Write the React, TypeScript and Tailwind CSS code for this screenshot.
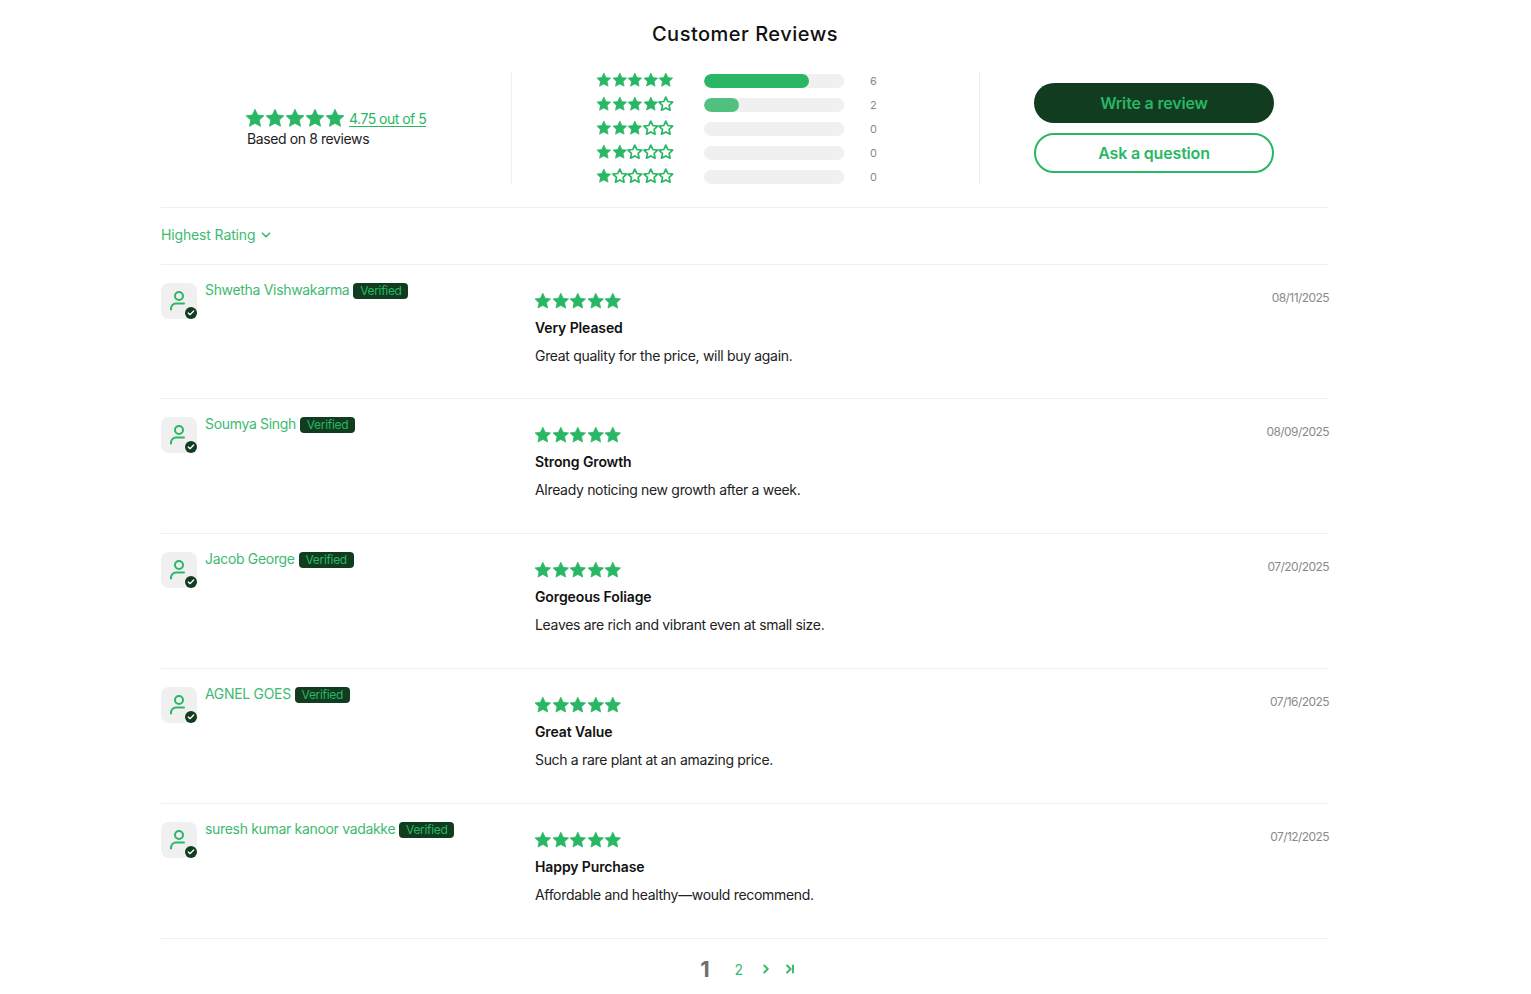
import React from 'react';
import { ChevronDown, ChevronRight, ChevronLast, Check } from 'lucide-react';

const STAR = 'M12 1.6l3.2 6.9 7.4.9-5.5 5.1 1.5 7.4L12 18.3l-6.6 3.6 1.5-7.4L1.4 9.4l7.4-.9z';

function Star({ filled, size }: { filled: boolean; size: number }) {
  return (
    <svg width={size} height={size} viewBox="0 0 24 24" className="shrink-0">
      <path
        d={STAR}
        fill={filled ? '#29b765' : 'none'}
        stroke="#29b765"
        strokeWidth={filled ? 1 : 2.6}
        strokeLinejoin="round"
      />
    </svg>
  );
}

function Stars({ count, size }: { count: number; size: number }) {
  return (
    <div className="flex items-center">
      {[1, 2, 3, 4, 5].map((i) => (
        <Star key={i} filled={i <= count} size={size} />
      ))}
    </div>
  );
}

const BARS = [
  { stars: 5, pct: 'w-[105px]', tone: 'bg-[#29b765]', total: 6 },
  { stars: 4, pct: 'w-[35px]', tone: 'bg-[#52c17f]', total: 2 },
  { stars: 3, pct: 'w-0', tone: 'bg-[#29b765]', total: 0 },
  { stars: 2, pct: 'w-0', tone: 'bg-[#29b765]', total: 0 },
  { stars: 1, pct: 'w-0', tone: 'bg-[#29b765]', total: 0 },
];

const REVIEWS = [
  { name: 'Shwetha Vishwakarma', date: '08/11/2025', title: 'Very Pleased', body: 'Great quality for the price, will buy again.' },
  { name: 'Soumya Singh', date: '08/09/2025', title: 'Strong Growth', body: 'Already noticing new growth after a week.' },
  { name: 'Jacob George', date: '07/20/2025', title: 'Gorgeous Foliage', body: 'Leaves are rich and vibrant even at small size.' },
  { name: 'AGNEL GOES', date: '07/16/2025', title: 'Great Value', body: 'Such a rare plant at an amazing price.' },
  { name: 'suresh kumar kanoor vadakke', date: '07/12/2025', title: 'Happy Purchase', body: 'Affordable and healthy—would recommend.' },
];

function Avatar() {
  return (
    <div className="relative w-9 h-9 rounded-lg bg-[#f0f0f0] flex items-center justify-center shrink-0">
      <svg width="24" height="24" viewBox="0 0 24 24" fill="none" stroke="#29b765" strokeWidth="2" strokeLinecap="round">
        <circle cx="12" cy="7" r="4" />
        <path d="M4 20.5v-1c0-2.5 2-5 5-5h8" />
      </svg>
      <div className="absolute right-0 bottom-0 w-3 h-3 rounded-full bg-[#113c1f] flex items-center justify-center">
        <Check size={8} strokeWidth={4} color="#ffffff" />
      </div>
    </div>
  );
}

export default function App() {
  return (
    <div className="bg-white h-[994px] overflow-hidden font-['Inter',sans-serif] tracking-[-0.02em]">
      <div className="ml-[161px] w-[1168px]">
        <h2 className="pt-[21px] h-[72px] text-center text-[20px] leading-[26px] font-medium text-[#111] tracking-[0.5px]">
          Customer Reviews
        </h2>

        {/* Summary */}
        <div className="flex h-[112px] items-stretch">
          <div className="w-[350px] pl-[84px] pt-[36px] tracking-[-0.032em]">
            <div className="flex items-center gap-[4px] h-[20px]">
              <Stars count={5} size={20} />
              <a className="text-[14px] text-[#29b765] underline underline-offset-2">4.75 out of 5</a>
            </div>
            <p className="mt-[1px] ml-[2px] text-[14px] leading-[20px] text-[#222] tracking-[-0.028em]">Based on 8 reviews</p>
          </div>

          <div className="w-[469px] border-x border-[#efefef] pl-[84px] flex flex-col">
            {BARS.map((b) => (
              <div key={b.stars} className="flex items-center h-[24px] shrink-0 first:mt-[-3px]">
                <div className="mb-[2px]">
                  <Stars count={b.stars} size={15.6} />
                </div>
                <div className="ml-[30px] w-[140px] h-[14px] rounded-full bg-[#f0f0f0] overflow-hidden">
                  <div className={`h-full rounded-full ${b.pct} ${b.tone}`} />
                </div>
                <span className="ml-[26px] text-[11px] text-[#8a8a8a]">{b.total}</span>
              </div>
            ))}
          </div>

          <div className="w-[349px] pl-[54px] pt-[11px] flex flex-col gap-[10px] tracking-[-0.011em]">
            <button className="w-[240px] h-[40px] rounded-full bg-[#113c1f] text-[#29b765] text-[16px] font-semibold">
              Write a review
            </button>
            <button className="w-[240px] h-[40px] rounded-full border-2 border-[#29b765] bg-white text-[#29b765] text-[16px] font-semibold">
              Ask a question
            </button>
          </div>
        </div>

        {/* Sort */}
        <div className="mt-[23px] border-y border-[#efefef] h-[58px] pb-[3px] flex items-center gap-[4px] text-[14px] text-[#3dba70] tracking-[-0.01em]">
          Highest Rating
          <ChevronDown size={14} strokeWidth={3} />
        </div>

        {/* Reviews */}
        {REVIEWS.map((r, i) => (
          <div key={r.name} className={`${i === 0 ? 'h-[134px]' : 'h-[135px]'} border-b border-[#efefef] flex pt-[18px]`}>
            <div className="w-[374px] flex items-start gap-2">
              <Avatar />
              <div className="flex items-center gap-[4px] -mt-[2px] h-[18px]">
                <span className="text-[14px] leading-[18px] text-[#3dba70]">{r.name}</span>
                <span className="mt-[2px] w-[55px] h-[16px] text-center rounded-[4px] bg-[#113c1f] text-[#29b765] text-[12px] leading-[16px]">Verified</span>
              </div>
            </div>
            <div className="flex-1 pt-[9px]">
              <div className="-ml-[1px]">
                <Stars count={5} size={17.6} />
              </div>
              <h3 className="mt-[8px] text-[14px] leading-[20px] font-semibold text-[#111] tracking-[-0.008em]">{r.title}</h3>
              <p className="mt-[8px] text-[14px] leading-[20px] text-[#222]">{r.body}</p>
            </div>
            <span className="pt-[7px] text-[12px] leading-[16px] text-[#8a8a8a] tracking-[-0.047em]">{r.date}</span>
          </div>
        ))}

        {/* Pagination */}
        <div className="mt-[17px] pl-[7px] flex items-center justify-center text-[#3dba70]">
          <span className="text-[22px] leading-[26px] font-bold text-[#6f6f6f]">1</span>
          <span className="ml-[25px] text-[14px]">2</span>
          <ChevronRight className="ml-[16px]" size={14} strokeWidth={3.5} />
          <ChevronLast className="ml-[10px]" size={14} strokeWidth={3.5} />
        </div>
      </div>
    </div>
  );
}
